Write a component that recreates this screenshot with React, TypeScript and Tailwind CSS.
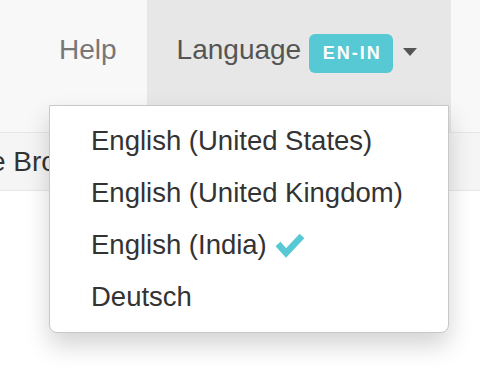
const LANGS = [
  { code: 'en-US', label: 'English (United States)' },
  { code: 'en-GB', label: 'English (United Kingdom)' },
  { code: 'en-IN', label: 'English (India)' },
  { code: 'de', label: 'Deutsch' },
];

function Check() {
  return (
    <svg width="30" height="26" viewBox="0 0 30 26" className="ml-[8px] shrink-0">
      <path d="M3 12 L11 21 L27 4" fill="none" stroke="#56c9d4" strokeWidth="6.5" strokeLinejoin="miter" />
    </svg>
  );
}

export default function App() {
  const current = 'en-IN';

  return (
    <div className="relative h-[368px] w-[480px] overflow-hidden bg-white font-['Liberation_Sans',Arial,sans-serif]">
      {/* navbar */}
      <div className="flex h-[133px] border-b border-[#e7e7e7] bg-[#f8f8f8] pl-[29px]">
        <div className="h-full px-[30px] pt-[30px] text-[28px] leading-[40px] text-[#777]">Help</div>
        <div className="flex h-full w-[304px] items-start bg-[#e7e7e7] px-[30px] pt-[30px]">
          <span className="text-[28px] leading-[40px] text-[#555]">Language</span>
          <span className="ml-[8px] mt-[4px] flex h-[39px] w-[84px] items-center justify-center rounded-[6px] bg-[#56c9d4] pl-[2px] text-[18px] font-bold tracking-[2px] text-white">
            EN-IN
          </span>
          <span className="ml-[10px] mt-[18px] h-0 w-0 border-x-[7.5px] border-t-[8px] border-x-transparent border-t-[#555]" />
        </div>
      </div>

      {/* sub bar, mostly hidden under the open dropdown */}
      <div className="flex h-[58px] items-center border-b border-[#e7e7e7] bg-[#f5f5f5]">
        <span className="-ml-[10px] whitespace-nowrap text-[28px] text-[#333]">e Bro</span>
      </div>

      {/* dropdown */}
      <div className="absolute left-[49px] top-[105px] w-[400px] rounded-b-[8px] border border-[#c8c8c8] bg-white py-[9px] shadow-[0_12px_24px_rgba(0,0,0,0.175)]">
        {LANGS.map((l) => (
          <div
            key={l.code}
            className="flex items-center whitespace-nowrap px-[41px] py-[6px] text-[27.5px] leading-[40px] text-[#333]"
          >
            {l.label}
            {l.code === current && <Check />}
          </div>
        ))}
      </div>
    </div>
  );
}
